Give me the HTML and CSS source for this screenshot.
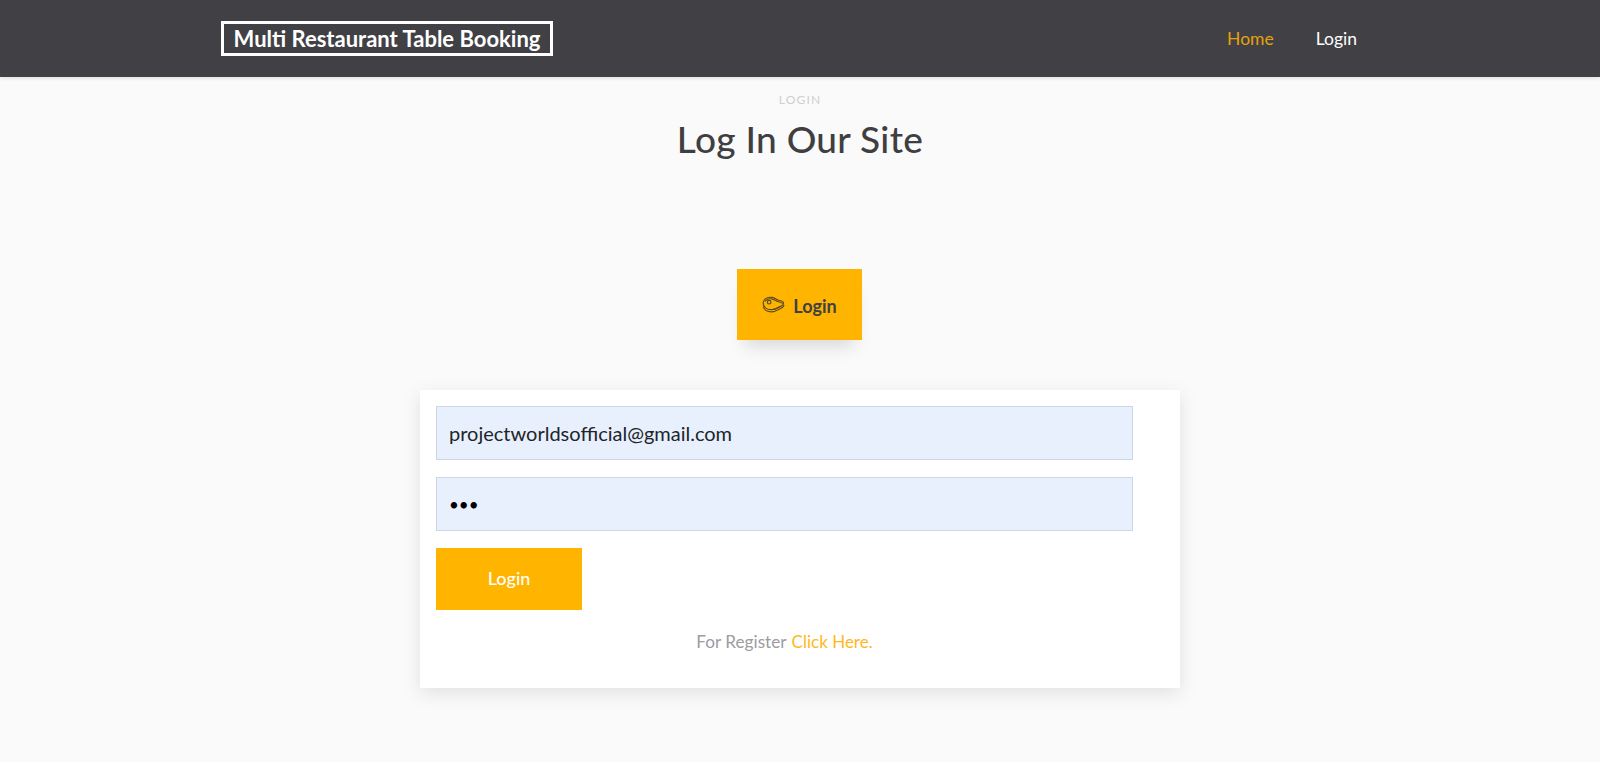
FILE: index.html
```html
<!DOCTYPE html>
<html lang="en">
<head>
<meta charset="utf-8">
<title>Login</title>
<link rel="stylesheet" href="styles.css">
</head>
<body>
<header class="topbar">
  <div class="topbar-inner">
    <a class="brand" href="#">Multi Restaurant Table Booking</a>
    <nav class="nav">
      <a class="nav-link active" href="#">Home</a>
      <a class="nav-link" href="#">Login</a>
    </nav>
  </div>
</header>
<main class="main">
  <div class="section-title">
    <p class="eyebrow">LOGIN</p>
    <h1 class="title">Log In Our Site</h1>
  </div>
  <div class="tab-row">
    <a class="tab" href="#">
      <svg class="tab-icon" viewBox="0 0 24 18" width="23" height="18" fill="none" stroke="#5a4a20" stroke-width="1.2" stroke-linecap="round" stroke-linejoin="round" aria-hidden="true">
        <path d="M2 4.500C3.500 1.800 7 .6 10.500 1c3 .4 4.500 2.300 7 3 2 .5 4.800.6 5 2.800.2 2.400-2 3.300-4.200 4.200-2.400 1-3.800 2.200-6.300 2.600-4 .6-7.700-.4-9.300-2.800C1 8.900 1 6.500 2 4.500Z"/>
        <path d="M1.500 11c1 3.500 5 5.300 9 5.200 3-.1 4.700-1.700 7.300-2.800 2.300-1 4.500-1.700 5-4"/>
        <path d="M3.600 4.800C5 3 7.500 2.300 10 2.600c2.800.4 4.300 2.300 7 3 1.500.4 3.500.5 4 1.600"/>
        <path d="M12 13.600c2.500-.5 4.500-2 6.500-2.900"/>
        <circle cx="7.500" cy="6" r="1.900"/>
      </svg>
      <span>Login</span>
    </a>
  </div>
  <section class="card">
    <form class="login-form">
      <input class="field" type="text" value="projectworldsofficial@gmail.com" aria-label="Email">
      <input class="field field-password" type="password" value="abc" aria-label="Password">
      <button class="submit" type="button">Login</button>
    </form>
    <p class="register">For Register <a class="register-link" href="#">Click Here.</a></p>
  </section>
</main>
</body>
</html>
```
FILE: styles.css
```css
* { box-sizing: border-box; }
html, body { margin: 0; padding: 0; }
body {
  height: 762px;
  overflow: hidden;
  background: #fafafa;
  font-family: "Lato", "Noto Sans", sans-serif;
  color: #414045;
}
a { text-decoration: none; }

.topbar {
  height: 77px;
  background: #414045;
  box-shadow: 0 1px 4px rgba(0, 0, 0, 0.12);
}
.topbar-inner {
  height: 100%;
  padding: 0 243px 0 221px;
  display: flex;
  align-items: center;
  justify-content: space-between;
}
.brand {
  width: 332px;
  height: 35px;
  margin-bottom: 1px;
  border: 3px solid #fff;
  display: flex;
  align-items: center;
  justify-content: center;
  color: #fff;
  font-size: 22px;
  font-weight: 700;
  white-space: nowrap;
}
.nav { display: flex; gap: 42px; }
.nav-link {
  color: #fff;
  font-size: 17.5px;
}
.nav-link.active { color: #e5a00d; }

.main { display: flex; flex-direction: column; align-items: center; }
.section-title { text-align: center; padding-top: 16px; }
.eyebrow {
  margin: 0;
  height: 14px;
  line-height: 14px;
  font-size: 12px;
  letter-spacing: 1.2px;
  color: #cfcfd2;
}
.title {
  margin: 10px 0 0;
  line-height: 44px;
  font-size: 37px;
  font-weight: 500;
  letter-spacing: 0.3px;
  color: #3f3f42;
}
.tab-row { margin: 108px 1px 0 0; }
.tab {
  width: 125px;
  height: 71px;
  padding-top: 3px;
  display: flex;
  align-items: center;
  justify-content: center;
  gap: 8px;
  background: #ffb400;
  box-shadow: 0 14px 18px -8px rgba(0, 0, 0, 0.14);
  color: #414045;
  font-size: 18px;
  font-weight: 700;
}
.tab-icon { margin-top: -3px; flex: none; }
.card {
  margin-top: 50px;
  width: 760px;
  height: 298px;
  padding: 16px;
  background: #fff;
  box-shadow: 0 5px 18px rgba(0, 0, 0, 0.1);
}
.login-form {
  display: flex;
  flex-direction: column;
  align-items: flex-start;
  gap: 17px;
}
.field {
  width: 697px;
  height: 54px;
  padding: 0 12px;
  border: 1px solid #cdd5e6;
  border-radius: 0;
  outline: none;
  background: #e8f0fe;
  color: #212529;
  font-family: "Lato", sans-serif;
  font-size: 20px;
}
.field-password { font-size: 17px; color: #000; }
.submit {
  width: 146px;
  height: 62px;
  padding-bottom: 4px;
  border: 0;
  background: #ffb400;
  color: #fff;
  font-family: "Lato", sans-serif;
  font-size: 18px;
  font-weight: 500;
}
.register {
  width: 697px;
  margin: 20px 0 0;
  text-align: center;
  line-height: 24px;
  font-size: 17.2px;
  color: #9c9ca1;
}
.register-link { color: #ffb81c; font-size: 17px; margin-left: 1px; }
```
